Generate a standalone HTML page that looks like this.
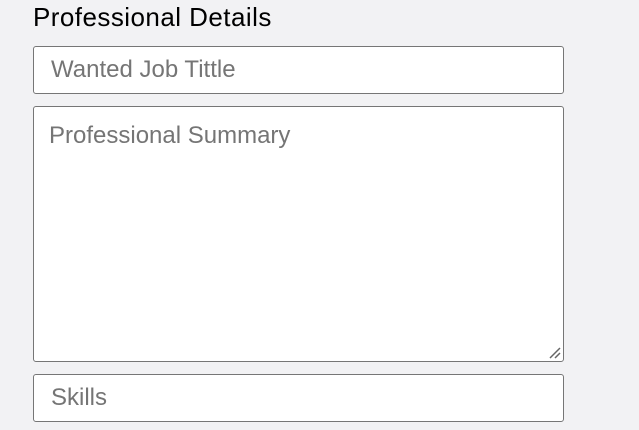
<!DOCTYPE html>
<html><head><style>
html,body{margin:0;width:639px;height:430px;background:#f2f2f4;overflow:hidden;font-family:"Liberation Sans",Arial,sans-serif}
h2{position:absolute;left:33px;top:1px;margin:0;font-size:26px;font-weight:normal;color:#000;line-height:32px;letter-spacing:.45px}
.b{position:absolute;left:33px;width:531px;background:#fff;border:1px solid #767676;border-radius:3px;color:#757575;font-size:24px;box-sizing:border-box}
.t{padding-left:17px;line-height:46px}
</style></head><body>
<h2>Professional Details</h2>
<div class="b t" style="top:46px;height:48px">Wanted Job Tittle</div>
<div class="b" style="top:106px;height:256px"><div style="position:absolute;left:15px;top:15px;line-height:28px">Professional Summary</div>
<svg style="position:absolute;right:2px;bottom:2px" width="12" height="12"><path d="M1 11L11 1M6 11L11 6" stroke="#666" stroke-width="1.5"/></svg></div>
<div class="b t" style="top:374px;height:48px">Skills</div>
</body></html>
